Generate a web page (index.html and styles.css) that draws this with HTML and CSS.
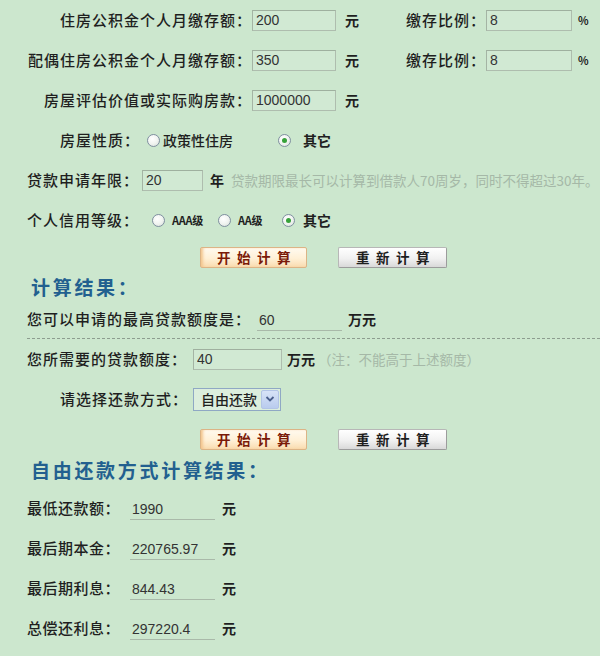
FILE: index.html
```html
<!DOCTYPE html>
<html lang="zh-CN">
<head>
<meta charset="utf-8">
<title>公积金贷款计算器</title>
<link rel="stylesheet" href="styles.css">
</head>
<body>
<form class="calc">
  <div class="row">
    <label class="lbl lbl-col">住房公积金个人月缴存额：</label>
    <input class="field f-amt" type="text" value="200">
    <span class="unit">元</span>
    <label class="lbl lbl-ratio">缴存比例：</label>
    <input class="field f-ratio" type="text" value="8">
    <span class="pct">%</span>
  </div>
  <div class="row">
    <label class="lbl lbl-col">配偶住房公积金个人月缴存额：</label>
    <input class="field f-amt" type="text" value="350">
    <span class="unit">元</span>
    <label class="lbl lbl-ratio">缴存比例：</label>
    <input class="field f-ratio" type="text" value="8">
    <span class="pct">%</span>
  </div>
  <div class="row">
    <label class="lbl lbl-col">房屋评估价值或实际购房款：</label>
    <input class="field f-amt" type="text" value="1000000">
    <span class="unit">元</span>
  </div>
  <div class="row ind-60">
    <span class="lbl">房屋性质：</span>
    <span class="radio r-h1"></span><span class="opt opt-policy">政策性住房</span>
    <span class="radio checked r-h2"></span><span class="opt bold opt-other">其它</span>
  </div>
  <div class="row ind-27">
    <span class="lbl">贷款申请年限：</span>
    <input class="field f-years" type="text" value="20">
    <span class="unit unit-year">年</span>
    <span class="note note-years">贷款期限最长可以计算到借款人70周岁，同时不得超过30年。</span>
  </div>
  <div class="row ind-27">
    <span class="lbl">个人信用等级：</span>
    <span class="radio r-c1"></span><span class="opt small opt-aaa">AAA级</span>
    <span class="radio r-c2"></span><span class="opt small opt-aa">AA级</span>
    <span class="radio checked r-c3"></span><span class="opt bold opt-other2">其它</span>
  </div>
  <div class="btn-row">
    <button type="button" class="btn btn-go">开始计算</button>
    <button type="button" class="btn btn-reset">重新计算</button>
  </div>
  <h2 class="heading h-first">计算结果：</h2>
  <div class="row row-max ind-27">
    <span class="lbl">您可以申请的最高贷款额度是：</span>
    <span class="value v-max">60</span>
    <span class="unit unit-wan">万元</span>
  </div>
  <div class="dashed"></div>
  <div class="row ind-27">
    <span class="lbl">您所需要的贷款额度：</span>
    <input class="field f-need" type="text" value="40">
    <span class="unit unit-wan2">万元</span>
    <span class="note note-need">（注：不能高于上述额度）</span>
  </div>
  <div class="row ind-60">
    <span class="lbl">请选择还款方式：</span>
    <div class="select">
      <span class="sel-text">自由还款</span>
      <span class="sel-arrow"><svg width="10" height="8" viewBox="0 0 10 8"><path d="M1.5 2 L5 5.5 L8.5 2" fill="none" stroke="#4a5f8c" stroke-width="1.8"/></svg></span>
    </div>
  </div>
  <div class="btn-row btn-row2">
    <button type="button" class="btn btn-go">开始计算</button>
    <button type="button" class="btn btn-reset">重新计算</button>
  </div>
  <h2 class="heading h-second">自由还款方式计算结果：</h2>
  <div class="row ind-27">
    <span class="lbl lbl-res">最低还款额：</span>
    <span class="value v-res">1990</span>
    <span class="unit unit-res">元</span>
  </div>
  <div class="row ind-27">
    <span class="lbl lbl-res">最后期本金：</span>
    <span class="value v-res">220765.97</span>
    <span class="unit unit-res">元</span>
  </div>
  <div class="row ind-27">
    <span class="lbl lbl-res">最后期利息：</span>
    <span class="value v-res">844.43</span>
    <span class="unit unit-res">元</span>
  </div>
  <div class="row ind-27">
    <span class="lbl lbl-res">总偿还利息：</span>
    <span class="value v-res">297220.4</span>
    <span class="unit unit-res">元</span>
  </div>
</form>
</body>
</html>
```

FILE: styles.css
```css
* { box-sizing: border-box; }
html, body { margin: 0; padding: 0; }
body {
  background: #cce7ce;
  font-family: "Noto Sans CJK SC", "Noto Sans", sans-serif;
  color: #1f1f1f;
  font-size: 15px;
  width: 600px;
  height: 656px;
  overflow: hidden;
}
.calc { display: flex; flex-direction: column; margin: 0; }
.row { display: flex; align-items: center; height: 40px; white-space: nowrap; flex: none; }
.ind-27 { padding-left: 27px; }
.ind-60 { padding-left: 60px; }

.lbl { font-size: 15px; font-weight: 500; letter-spacing: 1px; line-height: 20px; }
.lbl-col { width: 252px; text-align: right; }
.lbl-ratio { margin-left: 46px; width: 80px; }
.lbl-res { letter-spacing: 0.5px; }

.field {
  font-family: "Liberation Sans", Arial, sans-serif;
  font-size: 14px;
  color: #333;
  height: 21px;
  padding: 0 3px;
  margin: 0;
  border: 1px solid #aebdae;
  border-top-color: #9fb09f;
  border-left-color: #a4b4a4;
  background: #d1e9d3;
  outline: none;
}
.f-amt { width: 84px; }
.f-ratio { width: 86px; }
.f-years { width: 61px; margin-left: 3px; }
.f-need { width: 89px; margin-left: 6px; }

.unit { font-size: 14px; font-weight: 700; margin-left: 9px; width: 15px; line-height: 20px; }
.unit-year { margin-left: 7px; }
.unit-wan { margin-left: 6px; width: auto; }
.unit-wan2 { margin-left: 5px; width: auto; }
.unit-res { margin-left: 7px; }
.pct { font-size: 11px; font-weight: 700; margin-left: 6px; }

.note { color: #a5b8a7; font-size: 13.5px; }
.note-years { margin-left: 6px; }
.note-need { margin-left: 3px; font-size: 13.5px; }

.radio {
  display: inline-block;
  position: relative;
  width: 13px;
  height: 13px;
  border-radius: 50%;
  border: 1px solid #7f8fa0;
  background: radial-gradient(circle at 40% 35%, #ffffff 0%, #f1f4f1 50%, #d5ddd6 100%);
  flex: none;
}
.radio.checked::after {
  content: "";
  position: absolute;
  left: 3px;
  top: 3px;
  width: 5px;
  height: 5px;
  border-radius: 50%;
  background: #37a23a;
}
.r-h1 { margin-left: 7px; }
.r-h2 { margin-left: 45px; }
.r-c1 { margin-left: 13px; }
.r-c2 { margin-left: 0; }
.r-c3 { margin-left: 0; }

.opt { font-size: 14px; font-weight: 500; line-height: 20px; }
.opt-policy { margin-left: 3px; }
.opt-other { margin-left: 12px; }
.opt-other2 { margin-left: 8px; }
.opt.bold { font-weight: 700; }
.opt.small { font-size: 11px; font-weight: 700; letter-spacing: -0.3px; }
.opt-aaa { margin-left: 7px; width: 46px; }
.opt-aa { margin-left: 7px; width: 44px; }

.btn-row { display: flex; height: 30px; padding: 7px 0 0 200px; flex: none; }
.btn-row2 { height: 31px; padding-top: 10px; }
.btn {
  height: 21px;
  margin: 0;
  padding: 0 0 0 7px;
  font-family: "Noto Sans CJK SC", sans-serif;
  font-size: 13.5px;
  font-weight: 700;
  letter-spacing: 6.5px;
  line-height: 19px;
  border-radius: 2px;
  cursor: pointer;
}
.btn-go {
  width: 107px;
  color: #7a1a08;
  border: 1px solid #dcb486;
  background: linear-gradient(#fffaf0 0%, #fff0d6 55%, #f9dcb0 100%);
  box-shadow: inset 3px 0 3px -1px #f3c68e;
}
.btn-reset {
  width: 109px;
  margin-left: 31px;
  color: #1e1e1e;
  border: 1px solid #b7b7b7;
  border-right-color: #9c9c9c;
  border-bottom-color: #9c9c9c;
  background: linear-gradient(#ffffff 0%, #f1f1f1 55%, #d9d9d9 100%);
}

.heading {
  margin: 0;
  padding-left: 31px;
  font-size: 19px;
  font-weight: 700;
  letter-spacing: 2.7px;
  line-height: 24px;
  height: 24px;
  color: #22608f;
  flex: none;
}
.h-first { margin-top: 5px; }
.h-second { margin-top: 8px; margin-bottom: 6px; }

.row-max { height: 39px; }
.value {
  display: flex;
  align-items: center;
  height: 21px;
  padding-left: 2px;
  font-family: "Liberation Sans", Arial, sans-serif;
  font-size: 14px;
  color: #333;
  border-bottom: 1px solid #a9b9a9;
}
.v-max { width: 85px; margin-left: 6px; margin-top: 4px; }
.v-res { width: 85px; margin-left: 10px; margin-top: 2px; }

.dashed { height: 0; margin-left: 27px; border-top: 1px dashed #8d9d8f; flex: none; }

.select {
  display: flex;
  align-items: center;
  margin-left: 5px;
  width: 88px;
  height: 23px;
  border: 1px solid #8fa8c4;
  background: #dceedd;
  padding: 1px;
}
.sel-text { flex: 1; font-size: 14px; font-weight: 500; padding-left: 6px; line-height: 19px; color: #1f1f1f; }
.sel-arrow {
  display: flex;
  align-items: center;
  justify-content: center;
  width: 18px;
  height: 19px;
  border-radius: 2px;
  background: linear-gradient(#d7e3f7, #b9cbee);
  border: 1px solid #b2c4e6;
}
```
